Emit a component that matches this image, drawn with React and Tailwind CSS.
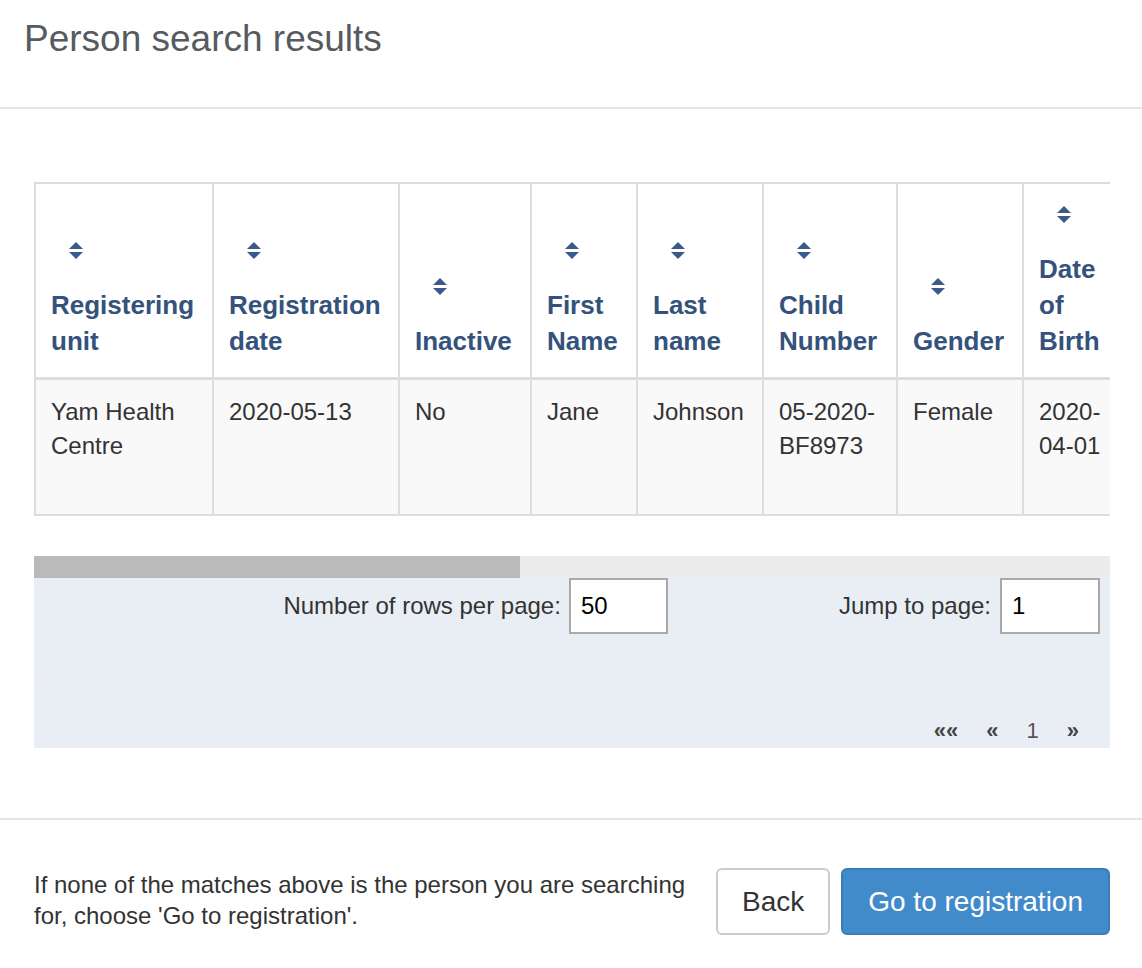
import React from "react";

const columns = [
  { key: "unit", label: ["Registering", "unit"], width: 178 },
  { key: "date", label: ["Registration", "date"], width: 186 },
  { key: "inactive", label: ["Inactive"], width: 132 },
  { key: "first", label: ["First", "Name"], width: 106 },
  { key: "last", label: ["Last", "name"], width: 126 },
  { key: "child", label: ["Child", "Number"], width: 134 },
  { key: "gender", label: ["Gender"], width: 126 },
  { key: "dob", label: ["Date", "of", "Birth"], width: 110 },
];

const row = {
  unit: ["Yam Health", "Centre"],
  date: ["2020-05-13"],
  inactive: ["No"],
  first: ["Jane"],
  last: ["Johnson"],
  child: ["05-2020-", "BF8973"],
  gender: ["Female"],
  dob: ["2020-", "04-01"],
};

function SortIcon() {
  return (
    <svg width="14" height="18" viewBox="0 0 14 18" className="block">
      <path d="M7 0 L14 7 L0 7 Z" fill="#3a5a8b" />
      <path d="M0 10 L14 10 L7 17 Z" fill="#3a5a8b" />
    </svg>
  );
}

function Lines({ lines }) {
  return lines.map((l, i) => (
    <div key={i} className="whitespace-nowrap">
      {l}
    </div>
  ));
}

export default function App() {
  return (
    <div
      className="w-[1142px] h-[968px] bg-white overflow-hidden"
      style={{ fontFamily: '"Liberation Sans", Arial, sans-serif' }}
    >
      {/* header */}
      <div className="h-[109px] pt-[19px] pl-[24px] border-b-2 border-[#e5e5e5]">
        <h1 className="text-[37px] leading-[40px] text-[#555b60]">Person search results</h1>
      </div>

      {/* body */}
      <div className="pt-[73px] pl-[34px] pr-[32px] pb-[70px]">
        <div className="w-[1076px] overflow-hidden">
          <table className="table-fixed border-collapse w-[1098px]">
            <colgroup>
              {columns.map((c) => (
                <col key={c.key} style={{ width: c.width }} />
              ))}
            </colgroup>
            <thead>
              <tr className="h-[195px]">
                {columns.map((c) => (
                  <th
                    key={c.key}
                    className="align-bottom text-left border-2 border-b-[3px] border-[#dddddd] px-[15px] pb-[18px] font-bold text-[26px] leading-[36px] text-[#34527c]"
                  >
                    <div className="pl-[18px] mb-[27px]">
                      <SortIcon />
                    </div>
                    <Lines lines={c.label} />
                  </th>
                ))}
              </tr>
            </thead>
            <tbody>
              <tr className="h-[137px] bg-[#f9f9f9]">
                {columns.map((c) => (
                  <td
                    key={c.key}
                    className="align-top border-2 border-[#dddddd] px-[15px] pt-[15px] text-[24px] leading-[34px] text-[#333333]"
                  >
                    <Lines lines={row[c.key]} />
                  </td>
                ))}
              </tr>
            </tbody>
          </table>
        </div>

        {/* scrollbar */}
        <div className="mt-[40px] w-[1076px] h-[22px] bg-[#ececec]">
          <div className="w-[486px] h-[22px] bg-[#bababa]" />
        </div>

        {/* pagination panel */}
        <div className="w-[1076px] h-[170px] bg-[#e9eef5] pl-[6px] pr-[10px] text-[24px] text-[#333333]">
          <div className="h-[95px] flex items-start justify-end border-b border-[#edf1f6]">
            <div className="flex items-center">
              <span className="mr-[8px]">Number of rows per page:</span>
              <div className="w-[99px] h-[56px] bg-white border-2 border-[#a9a9a9] flex items-center pl-[10px] text-black">
                50
              </div>
            </div>
            <div className="flex items-center ml-[171px]">
              <span className="mr-[9px]">Jump to page:</span>
              <div className="w-[100px] h-[56px] bg-white border-2 border-[#a9a9a9] flex items-center pl-[10px] text-black">
                1
              </div>
            </div>
          </div>
          <div className="h-[74px] flex items-end justify-end pr-[7px] text-[22px]">
            <div className="flex items-center leading-[32px]">
              <span className="px-[14px] font-bold text-[#444]">««</span>
              <span className="px-[14px] font-bold text-[#444]">«</span>
              <span className="px-[14px] text-[#555]">1</span>
              <span className="px-[14px] font-bold text-[#444]">»</span>
            </div>
          </div>
        </div>
      </div>

      {/* footer */}
      <div className="border-t-2 border-[#e5e5e5] pt-[48px] pl-[34px] pr-[32px] flex items-center">
        <p className="w-[668px] text-[24px] leading-[31px] text-[#333333] -mt-[3px]">
          If none of the matches above is the person you are searching for, choose 'Go to registration'.
        </p>
        <div className="ml-auto flex gap-[11px]">
          <button className="h-[67px] px-[24px] rounded-[6px] border-2 border-[#cccccc] bg-white text-[28px] text-[#333333]">
            Back
          </button>
          <button className="h-[67px] px-[25px] rounded-[6px] border-2 border-[#3a7cb9] bg-[#428bca] text-[28px] text-white">
            Go to registration
          </button>
        </div>
      </div>
    </div>
  );
}
